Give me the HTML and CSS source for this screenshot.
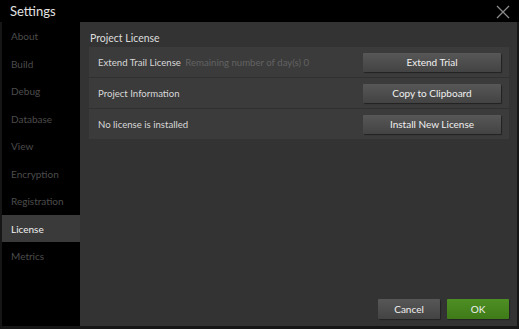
FILE: index.html
```html
<!DOCTYPE html>
<html lang="en">
<head>
    <meta charset="UTF-8">
    <title>Settings</title>
    <link rel="stylesheet" href="styles.css">
</head>
<body>
    <div class="window">
        <div class="title-bar">
            <span class="title">Settings</span>
            <svg class="close" width="14" height="14" viewBox="0 0 14 14">
                <path d="M1 1 L13 13 M13 1 L1 13" stroke="#8a8a8a" stroke-width="1.3" fill="none"/>
            </svg>
        </div>
        <div class="main">
            <ul class="sidebar">
                <li>About</li>
                <li>Build</li>
                <li>Debug</li>
                <li>Database</li>
                <li>View</li>
                <li>Encryption</li>
                <li>Registration</li>
                <li class="active">License</li>
                <li>Metrics</li>
            </ul>
            <div class="content">
                <div class="section-title">Project License</div>
                <div class="group">
                    <div class="row">
                        <span class="label">Extend Trail License <span class="hint">Remaining number of day(s) 0</span></span>
                        <button class="button">Extend Trial</button>
                    </div>
                    <div class="row">
                        <span class="label">Project Information</span>
                        <button class="button">Copy to Clipboard</button>
                    </div>
                    <div class="row">
                        <span class="label">No license is installed</span>
                        <button class="button">Install New License</button>
                    </div>
                </div>
                <div class="footer">
                    <button class="button small">Cancel</button>
                    <button class="button small ok">OK</button>
                </div>
            </div>
        </div>
    </div>
</body>
</html>
```

FILE: styles.css
```css
body {
    margin: 0;
    background-color: #161616;
    font-family: Lato, "Noto Sans", sans-serif;
}

.window {
    width: 519px;
    height: 329px;
    box-sizing: border-box;
    padding: 0 2px 3px 2px;
    background-color: #161616;
    display: flex;
    flex-direction: column;
}

.title-bar {
    height: 22px;
    background-color: #000;
    display: flex;
    align-items: center;
    justify-content: space-between;
    padding: 0 9px 0 10px;
    margin: 0 -2px;
}

.title {
    color: #e2e2e2;
    font-size: 13px;
}

.close {
    margin-top: 1px;
}

.main {
    flex: 1;
    display: flex;
}

.sidebar {
    list-style: none;
    margin: 0;
    padding: 0;
    width: 78px;
    background-color: #000;
}

.sidebar li {
    height: 27.5px;
    line-height: 28px;
    padding-left: 9px;
    font-size: 10px;
    color: #4c4c4c;
}

.sidebar li.active {
    background-color: #3a3a3a;
    color: #f0f0f0;
}

.content {
    flex: 1;
    background-color: #333;
    padding: 9px 8px 7px 9px;
    display: flex;
    flex-direction: column;
}

.section-title {
    color: #dcdcdc;
    font-size: 10.5px;
    line-height: 14px;
    padding-left: 1px;
    margin-bottom: 2px;
}

.group {
    background-color: #3b3b3b;
}

.row {
    height: 30px;
    display: flex;
    align-items: center;
    justify-content: space-between;
    padding: 0 8px 0 9px;
    border-bottom: 1px solid #303030;
}

.row:last-child {
    border-bottom: none;
}

.label {
    color: #d8d8d8;
    font-size: 9.6px;
}

.hint {
    color: #626262;
    margin-left: 2px;
}

.button {
    width: 138px;
    height: 19px;
    border: none;
    border-radius: 1px;
    background: linear-gradient(#575757, #434343);
    box-shadow: 1px 1px 1px #222;
    color: #f0f0f0;
    font-family: inherit;
    font-size: 10px;
    padding: 0;
}

.footer {
    margin-top: auto;
    display: flex;
    justify-content: flex-end;
    gap: 7px;
}

.button.small {
    width: 62px;
    height: 20px;
}

.ok {
    background: linear-gradient(#4e8f24, #3f7a18);
}
```
